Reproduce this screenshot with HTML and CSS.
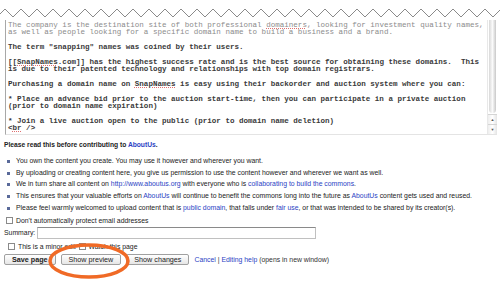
FILE: index.html
```html
<!DOCTYPE html>
<html lang="en">
<head>
    <meta charset="UTF-8">
    <title>Editing SnapNames.com - AboutUs</title>
    <link rel="stylesheet" href="styles.css">
</head>
<body>
    <div class="editor">
        <svg class="torn" width="500" height="20" viewBox="0 0 500 20">
            <polyline fill="none" stroke="#8a8a8a" stroke-width="1"
                points="-3,17 5,9 13,17 21,9 29,17 37,9 45,17 53,9 61,17 69,9 77,17 85,9 93,17 101,9 109,17 117,9 125,17 133,9 141,17 149,9 157,17 165,9 173,17 181,9 189,17 197,9 205,17 213,9 221,17 229,9 237,17 245,9 253,17 261,9 269,17 277,9 285,17 293,9 301,17 309,9 317,17 325,9 333,17 341,9 349,17 357,9 365,17 373,9 381,17 389,9 397,17 405,9 413,17 421,9 429,17 437,9 445,17 453,9 461,17 469,9 477,17 485,9 493,17 501,9 509,17"/>
        </svg>

        <div class="editbox">
<pre class="wikitext"><span class="faded">The company is the destination site of both professional <u>domainers</u>, looking for investment quality names,
as well as people looking for a specific domain name to build a business and a brand.</span>

The term "snapping" names was coined by their users.

[[<u>SnapNames</u>.com]] has the highest success rate and is the best source for obtaining these domains.  This
is due to their patented technology and relationships with top domain registrars.

Purchasing a domain name on <u>SnapNames</u> is easy using their backorder and auction system where you can:

* Place an advance bid prior to the auction start-time, then you can participate in a private auction
(prior to domain name expiration)

* Join a live auction open to the public (prior to domain name deletion)
&lt;<u>br</u> /&gt;</pre>
            <div class="scrollbar">
                <div class="thumb"></div>
                <div class="arrow">&#9650;</div>
                <div class="arrow">&#9660;</div>
            </div>
        </div>

        <p class="warning">Please read this before contributing to <a href="#">AboutUs</a>.</p>

        <ul class="terms">
            <li>You own the content you create. You may use it however and wherever you want.</li>
            <li>By uploading or creating content here, you give us permission to use the content however and wherever we want as well.</li>
            <li>We in turn share all content on <a href="#">http://www.aboutus.org</a> with everyone who is <a href="#">collaborating to build the commons</a>.</li>
            <li>This ensures that your valuable efforts on <a href="#">AboutUs</a> will continue to benefit the commons long into the future as <a href="#">AboutUs</a> content gets used and reused.</li>
            <li>Please feel warmly welcomed to upload content that is <a href="#">public domain</a>, that falls under <a href="#">fair use</a>, or that was intended to be shared by its creator(s).</li>
        </ul>

        <div class="options">
            <label class="check"><span class="box"></span>Don't automatically protect email addresses</label>
            <div class="summary">
                <span>Summary:</span>
                <span class="field"></span>
            </div>
            <div class="checks">
                <label class="check"><span class="box"></span>This is a minor edit</label>
                <label class="check"><span class="box"></span>Watch this page</label>
            </div>
            <div class="buttons">
                <span class="btn save">Save page</span>
                <span class="btn">Show preview</span>
                <span class="btn">Show changes</span>
                <span class="links"><a href="#">Cancel</a> | <a href="#">Editing help</a> (opens in new window)</span>
            </div>
        </div>

        <!-- hand-drawn circle round the preview button -->
        <svg class="circle" width="90" height="40" viewBox="0 0 90 40">
            <ellipse cx="44" cy="19" rx="39" ry="16" fill="none" stroke="#f06a26" stroke-width="3.5"/>
        </svg>
    </div>
</body>
</html>
```

FILE: styles.css
```css
body {
    margin: 0;
    background: #fff;
    font-family: "Liberation Sans", Arial, sans-serif;
    font-size: 6.86px;
    color: #222;
}
a {
    color: #2b3fc4;
    text-decoration: none;
}
.editor {
    position: relative;
    width: 500px;
    height: 281px;
    overflow: hidden;
}
.torn {
    display: block;
}
.editbox {
    display: flex;
    margin-left: 5px;
    width: 492px;
    height: 115px;
    border-left: 1px solid #a8a8a8;
    border-bottom: 1px solid #e4e4e4;
    box-sizing: border-box;
}
.wikitext {
    flex: 1;
    margin: 0;
    padding: 2px 0 0 2px;
    font-family: "Liberation Mono", "Courier New", monospace;
    font-size: 7.55px;
    line-height: 7.36px;
    font-weight: bold;
    color: #3a3a3a;
    overflow: hidden;
}
.wikitext .faded {
    color: #8c8c8c;
    font-weight: normal;
}
.wikitext u {
    text-decoration: underline dotted #e07070;
}
.scrollbar {
    width: 9px;
    display: flex;
    flex-direction: column;
    border-left: 1px solid #e8e8e8;
}
.thumb {
    flex: 1;
    margin: 0 1px 1px;
    border-radius: 0 0 4px 4px;
    background: linear-gradient(90deg, #d8d8d8, #fafafa 50%, #c8c8c8);
}
.arrow {
    height: 9px;
    font-size: 4px;
    line-height: 9px;
    text-align: center;
    color: #555;
    border-top: 1px solid #d4d4d4;
    background: linear-gradient(90deg, #eee, #fff 50%, #e4e4e4);
}
.warning {
    margin: 6px 0 0 4px;
    font-weight: bold;
    font-size: 6.7px;
}
.terms {
    list-style: none;
    margin: 7px 0 0;
    padding: 0 0 0 16px;
}
.terms li {
    position: relative;
    height: 11.7px;
    line-height: 11.7px;
    white-space: nowrap;
}
.terms li::before {
    content: "";
    position: absolute;
    left: -9px;
    top: 5px;
    width: 3px;
    height: 3px;
    background: #5a6a9a;
}
.options {
    display: flex;
    flex-direction: column;
    padding-left: 4px;
    margin-top: 1px;
}
.check {
    display: flex;
    align-items: center;
    gap: 3px;
    height: 12px;
}
.box {
    width: 7px;
    height: 7px;
    border: 1px solid #8a8a8a;
    background: #fff;
    box-sizing: border-box;
}
.options > .check {
    margin-left: 2px;
}
.summary {
    display: flex;
    align-items: center;
    gap: 2px;
    height: 13px;
}
.field {
    width: 279px;
    height: 12px;
    border: 1px solid #c0c0c0;
    border-top-color: #8a8a8a;
    box-sizing: border-box;
}
.checks {
    display: flex;
    gap: 3px;
    padding-left: 4px;
    height: 14px;
    align-items: center;
}
.buttons {
    display: flex;
    align-items: center;
    gap: 5px;
    margin-top: 1px;
}
.btn {
    height: 11px;
    line-height: 10px;
    padding: 0 7px;
    font-size: 7.2px;
    border: 1px solid #a0a0a0;
    border-radius: 2px;
    background: linear-gradient(#fff, #e6e6e6);
    box-sizing: border-box;
}
.save {
    font-weight: bold;
}
.links {
    color: #333;
}
.circle {
    position: absolute;
    left: 45px;
    top: 242px;
}
```
